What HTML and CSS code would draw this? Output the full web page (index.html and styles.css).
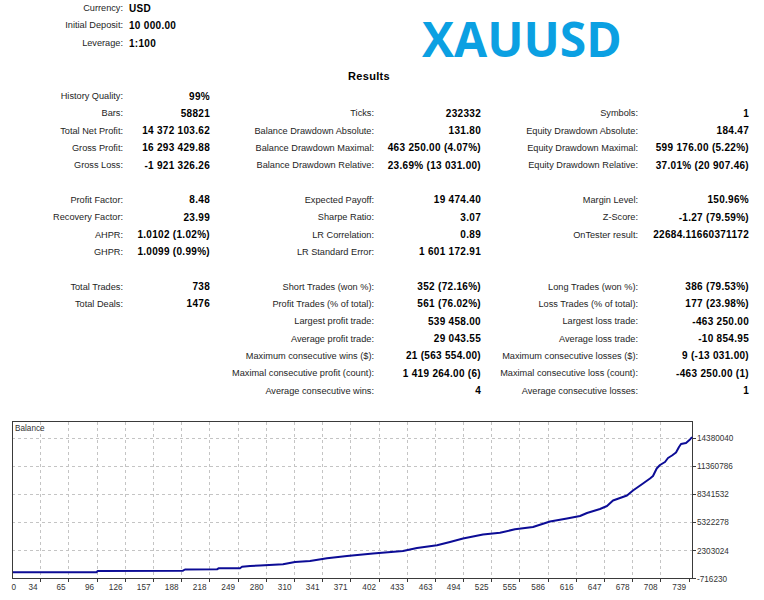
FILE: index.html
```html
<!DOCTYPE html>
<html>
<head>
<meta charset="utf-8">
<link rel="stylesheet" href="styles.css">
</head>
<body>
<div class="header">
  <div class="info">
    <span class="lbl">Currency:</span><span class="val">USD</span>
    <span class="lbl">Initial Deposit:</span><span class="val">10 000.00</span>
    <span class="lbl">Leverage:</span><span class="val">1:100</span>
  </div>
  <div class="title">XAUUSD</div>
</div>
<div class="results-title">Results</div>
<div class="stats">
  <span class="l">History Quality:</span><span class="v">99%</span><span class="l"></span><span class="v"></span><span class="l"></span><span class="v"></span>
  <span class="l">Bars:</span><span class="v">58821</span><span class="l">Ticks:</span><span class="v">232332</span><span class="l">Symbols:</span><span class="v">1</span>
  <span class="l">Total Net Profit:</span><span class="v">14 372 103.62</span><span class="l">Balance Drawdown Absolute:</span><span class="v">131.80</span><span class="l">Equity Drawdown Absolute:</span><span class="v">184.47</span>
  <span class="l">Gross Profit:</span><span class="v">16 293 429.88</span><span class="l">Balance Drawdown Maximal:</span><span class="v">463 250.00 (4.07%)</span><span class="l">Equity Drawdown Maximal:</span><span class="v">599 176.00 (5.22%)</span>
  <span class="l">Gross Loss:</span><span class="v">-1 921 326.26</span><span class="l">Balance Drawdown Relative:</span><span class="v">23.69% (13 031.00)</span><span class="l">Equity Drawdown Relative:</span><span class="v">37.01% (20 907.46)</span>
  <div class="gap"></div>
  <span class="l">Profit Factor:</span><span class="v">8.48</span><span class="l">Expected Payoff:</span><span class="v">19 474.40</span><span class="l">Margin Level:</span><span class="v">150.96%</span>
  <span class="l">Recovery Factor:</span><span class="v">23.99</span><span class="l">Sharpe Ratio:</span><span class="v">3.07</span><span class="l">Z-Score:</span><span class="v">-1.27 (79.59%)</span>
  <span class="l">AHPR:</span><span class="v">1.0102 (1.02%)</span><span class="l">LR Correlation:</span><span class="v">0.89</span><span class="l">OnTester result:</span><span class="v">22684.11660371172</span>
  <span class="l">GHPR:</span><span class="v">1.0099 (0.99%)</span><span class="l">LR Standard Error:</span><span class="v">1 601 172.91</span><span class="l"></span><span class="v"></span>
  <div class="gap"></div>
  <span class="l">Total Trades:</span><span class="v">738</span><span class="l">Short Trades (won %):</span><span class="v">352 (72.16%)</span><span class="l">Long Trades (won %):</span><span class="v">386 (79.53%)</span>
  <span class="l">Total Deals:</span><span class="v">1476</span><span class="l">Profit Trades (% of total):</span><span class="v">561 (76.02%)</span><span class="l">Loss Trades (% of total):</span><span class="v">177 (23.98%)</span>
  <span class="l"></span><span class="v"></span><span class="l">Largest profit trade:</span><span class="v">539 458.00</span><span class="l">Largest loss trade:</span><span class="v">-463 250.00</span>
  <span class="l"></span><span class="v"></span><span class="l">Average profit trade:</span><span class="v">29 043.55</span><span class="l">Average loss trade:</span><span class="v">-10 854.95</span>
  <span class="l"></span><span class="v"></span><span class="l">Maximum consecutive wins ($):</span><span class="v">21 (563 554.00)</span><span class="l">Maximum consecutive losses ($):</span><span class="v">9 (-13 031.00)</span>
  <span class="l"></span><span class="v"></span><span class="l">Maximal consecutive profit (count):</span><span class="v">1 419 264.00 (6)</span><span class="l">Maximal consecutive loss (count):</span><span class="v">-463 250.00 (1)</span>
  <span class="l"></span><span class="v"></span><span class="l">Average consecutive wins:</span><span class="v">4</span><span class="l">Average consecutive losses:</span><span class="v">1</span>
</div>
<svg class="chart" width="764" height="184" viewBox="0 416 764 184" xmlns="http://www.w3.org/2000/svg">
  <g stroke="#c4c4c4" stroke-width="1" stroke-dasharray="3 3" fill="none">
    <path d="M12 438.5H692M12 466.5H692M12 494.5H692M12 522.5H692M12 550.5H692"/>
    <path d="M40.5 422V578M68.5 422V578M97.5 422V578M125.5 422V578M153.5 422V578M181.5 422V578M209.5 422V578M238.5 422V578M266.5 422V578M294.5 422V578M322.5 422V578M350.5 422V578M379.5 422V578M407.5 422V578M435.5 422V578M463.5 422V578M491.5 422V578M519.5 422V578M548.5 422V578M576.5 422V578M604.5 422V578M632.5 422V578M660.5 422V578"/>
  </g>
  <rect x="12.5" y="421.5" width="680" height="157" fill="none" stroke="#3a3a3a" stroke-width="1"/>
  <g stroke="#3a3a3a" stroke-width="1">
    <path d="M692 438.5H696M692 466.5H696M692 494.5H696M692 522.5H696M692 550.5H696M692 578.5H696"/>
    <path d="M40.5 579V582M68.5 579V582M97.5 579V582M125.5 579V582M153.5 579V582M181.5 579V582M209.5 579V582M238.5 579V582M266.5 579V582M294.5 579V582M322.5 579V582M350.5 579V582M379.5 579V582M407.5 579V582M435.5 579V582M463.5 579V582M491.5 579V582M519.5 579V582M548.5 579V582M576.5 579V582M604.5 579V582M632.5 579V582M660.5 579V582M689.5 579V582"/>
  </g>
  <text class="ctext" x="15" y="431">Balance</text>
  <polyline fill="none" stroke="#0c0c96" stroke-width="2" stroke-linejoin="round" points="13,572.3 96.5,572.3 97.5,571 183,570.7 185,569.5 217,569.3 218.5,568.3 240,568.2 242,566.8 250,566 260,565.5 283,564.3 295,562 310,561 327,558.3 347,556 373,553.5 403,551 417,548 437,545.3 450,542 463,538.5 483,534.5 500,532.7 515,529.3 533,527 550,521.5 567,518.5 580,516 587,513 600,509 607,506 613,500.5 627,495.5 633,490.5 643,483.5 650,478.5 653,476 656.7,468.5 660,465 665,462 668,458 672,455.5 676,452.5 679,447 681,444 686,443 690,439.5 692,437"/>
  <g class="ctext" text-anchor="start">
    <text x="697" y="441">14380040</text>
    <text x="697" y="469">11360786</text>
    <text x="697" y="497">8341532</text>
    <text x="697" y="525">5322278</text>
    <text x="697" y="553.5">2303024</text>
    <text x="697" y="581.5">-716230</text>
  </g>
  <g class="ctext" text-anchor="end">
    <text x="16" y="589.5">0</text>
    <text x="37.5" y="589.5">34</text>
    <text x="65.5" y="589.5">65</text>
    <text x="94" y="589.5">96</text>
    <text x="122.5" y="589.5">126</text>
    <text x="150.5" y="589.5">157</text>
    <text x="178.5" y="589.5">188</text>
    <text x="206.5" y="589.5">218</text>
    <text x="235" y="589.5">249</text>
    <text x="263.5" y="589.5">280</text>
    <text x="291.5" y="589.5">310</text>
    <text x="319.5" y="589.5">341</text>
    <text x="347.5" y="589.5">371</text>
    <text x="376" y="589.5">402</text>
    <text x="404" y="589.5">433</text>
    <text x="432.5" y="589.5">463</text>
    <text x="460.5" y="589.5">494</text>
    <text x="488.5" y="589.5">525</text>
    <text x="516.5" y="589.5">555</text>
    <text x="545" y="589.5">586</text>
    <text x="573.5" y="589.5">616</text>
    <text x="601.5" y="589.5">647</text>
    <text x="629.5" y="589.5">678</text>
    <text x="657.5" y="589.5">708</text>
    <text x="686" y="589.5">739</text>
  </g>
</svg>
</body>
</html>
```
FILE: styles.css
```css
body {
  margin: 0;
  background: #ffffff;
  font-family: "Liberation Sans", Arial, sans-serif;
  color: #000;
  width: 764px;
}
.header {
  display: flex;
  height: 52px;
}
.info {
  display: grid;
  grid-template-columns: 123px auto;
  grid-auto-rows: 17.33px;
  width: 422px;
  align-content: start;
}
.info .lbl {
  text-align: right;
  font-size: 9.2px;
  color: #1e1e1e;
  line-height: 17.33px;
  white-space: nowrap;
}
.info .val {
  padding-left: 6px;
  font-weight: bold;
  font-size: 10px;
  letter-spacing: 0.3px;
  line-height: 17.33px;
  white-space: nowrap;
}
.title {
  font-family: "Open Sans", sans-serif;
  font-weight: 700;
  font-size: 48px;
  line-height: 50px;
  height: 50px;
  margin-top: 14px;
  color: #0ba0e2;
}
.results-title {
  width: 738px;
  text-align: center;
  font-weight: bold;
  font-size: 11px;
  letter-spacing: 0.3px;
  line-height: 18px;
  margin-top: 15px;
}
.stats {
  display: grid;
  grid-template-columns: 123px 87px 164px 107px 157px 111px;
  grid-auto-rows: 17.33px;
  margin-top: 2.35px;
}
.stats .l {
  display: flex;
  justify-content: flex-end;
  align-items: center;
  white-space: nowrap;
  font-size: 9.2px;
  color: #1e1e1e;
}
.stats .v {
  display: flex;
  justify-content: flex-end;
  align-items: center;
  white-space: nowrap;
  font-weight: bold;
  font-size: 10px;
  letter-spacing: 0.3px;
}
.gap {
  grid-column: 1 / -1;
}
.chart {
  display: block;
  margin-top: 16.7px;
}
.ctext {
  font-family: "Liberation Sans", Arial, sans-serif;
  font-size: 8.2px;
  fill: #333333;
}
```
